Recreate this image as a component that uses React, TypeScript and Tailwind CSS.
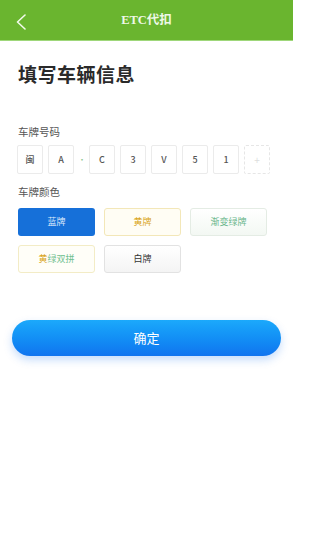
const plate = ['闽', 'A', 'C', '3', 'V', '5', '1']

const cn = { fontFamily: '"Noto Sans CJK SC", "Noto Sans", sans-serif' }

export default function App() {
  return (
    <div className="min-h-[550px] w-[293px] bg-white" style={cn}>
      {/* Header */}
      <div className="relative flex h-[41px] items-center justify-center bg-[#6ab52f] border-b border-[#9fd77a]">
        <svg
          className="absolute left-[15px] top-[14px]"
          width="13"
          height="16"
          viewBox="0 0 13 16"
          fill="none"
          stroke="#f2faec"
          strokeWidth="1.6"
          strokeLinecap="round"
          strokeLinejoin="round"
        >
          <path d="M10 1 L2.5 8 L10 15" />
        </svg>
        <span
          className="text-[12.5px] font-bold text-[#eef8e6]"
          style={{ fontFamily: '"Liberation Serif", "Noto Sans CJK SC", serif' }}
        >
          ETC代扣
        </span>
      </div>

      <div className="px-[18px]">
        <h1 className="mt-[22px] text-[19px] font-bold leading-[22px] tracking-[0.5px] text-[#2a2a2a]">
          填写车辆信息
        </h1>

        {/* Plate number */}
        <div className="mt-[40px] text-[10.5px] leading-[14px] text-[#555]">车牌号码</div>
        <div className="mt-[6px] -ml-[1px] flex items-center">
          {plate.map((ch, i) => (
            <div key={i} className="flex items-center">
              {i === 2 && (
                <span className="mx-[4px] w-[7px] text-center text-[8px] leading-none text-[#8bc48b]">·</span>
              )}
              {i > 0 && i !== 2 && <div className="w-[5px]" />}
              <div className="flex h-[29px] w-[26px] items-center justify-center rounded-[2px] border border-[#ebebeb] text-[9px] font-medium text-[#555]">
                {ch}
              </div>
            </div>
          ))}
          <div className="ml-[5px] flex h-[29px] w-[26px] items-center justify-center rounded-[2px] border border-dashed border-[#e6e6e6] text-[10px] text-[#ddd]">
            +
          </div>
        </div>

        {/* Plate colour */}
        <div className="mt-[11px] text-[10.5px] leading-[14px] text-[#555]">车牌颜色</div>
        <div className="mt-[9px] grid grid-cols-[77px_77px_77px] gap-x-[9px] gap-y-[9px]">
          <div className="flex h-[28px] items-center justify-center rounded-[3px] bg-[#1670d9] text-[9px] text-[#dce9fb]">
            蓝牌
          </div>
          <div className="flex h-[28px] items-center justify-center rounded-[3px] border border-[#f3e7b8] bg-[#fffdf4] text-[9px] text-[#d9a521]">
            黄牌
          </div>
          <div className="flex h-[28px] items-center justify-center rounded-[3px] border border-[#e4ece4] bg-gradient-to-b from-white to-[#f3f8f3] text-[9px] text-[#67b58a]">
            渐变绿牌
          </div>
          <div className="flex h-[28px] items-center justify-center rounded-[3px] border border-[#f3ecc6] bg-[#fffef8] text-[9px]">
            <span className="text-[#d9a521]">黄</span>
            <span className="text-[#6fc08e]">绿双拼</span>
          </div>
          <div className="flex h-[28px] items-center justify-center rounded-[3px] border border-[#e2e2e2] bg-gradient-to-b from-white to-[#f4f4f4] text-[9px] text-[#333]">
            白牌
          </div>
        </div>
      </div>

      {/* Confirm */}
      <div className="mt-[47px] px-[12px]">
        <div className="flex h-[36px] items-center justify-center rounded-full bg-gradient-to-b from-[#1ca9fb] to-[#1274ef] text-[13px] text-white shadow-[0_4px_8px_rgba(30,120,240,0.25)]">
          确定
        </div>
      </div>
    </div>
  )
}
